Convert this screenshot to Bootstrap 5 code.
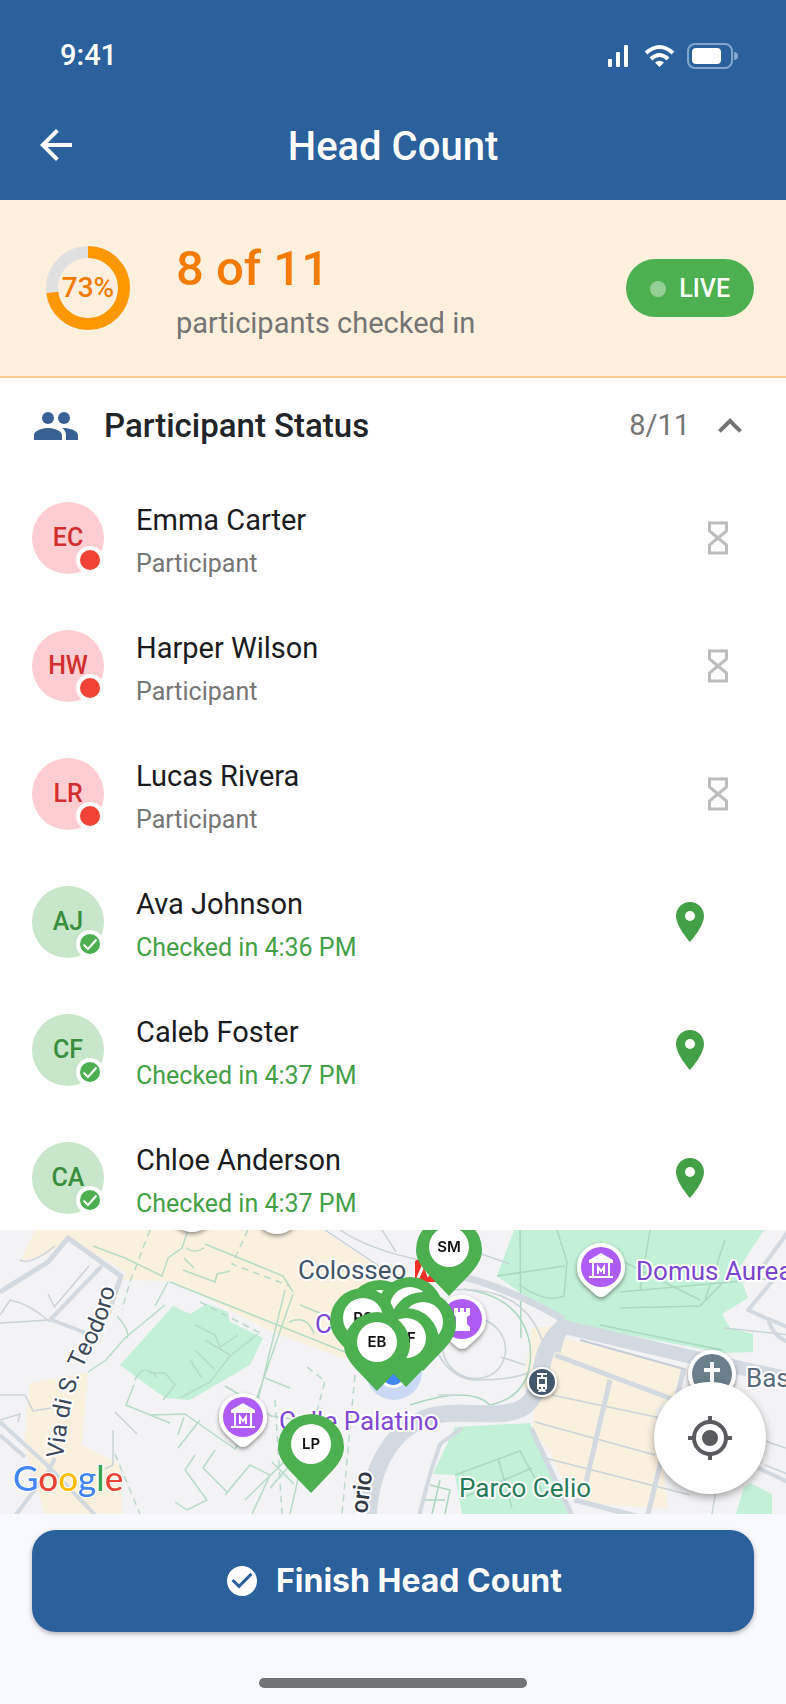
<!DOCTYPE html>
<html lang="en">
<head>
<meta charset="utf-8">
<meta name="viewport" content="width=device-width, initial-scale=1">
<title>Head Count</title>
<link href="https://cdn.jsdelivr.net/npm/bootstrap@5.3.0/dist/css/bootstrap.min.css" rel="stylesheet">
<style>
  :root { --brand: #2a609b; --ok: #4caf50; --muted: #757575; }
  body { font-family: Roboto, "Liberation Sans", sans-serif; color: #1a1b1e; background: #f8f9ff; }
  svg { display: block; flex: none; }
  .icon-lg { width: 48px; height: 48px; }
  .icon-md { width: 40px; height: 40px; }
  .icon-sm { width: 36px; height: 36px; }
  .app-top { background: var(--brand); height: 200px; }
  .status-strip { height: 112px; padding: 0 48px 0 60px; }
  .clock { font-size: 29px; font-weight: 500; }
  .title-strip { height: 66px; padding: 0 32px; }
  .screen-title { font-size: 40px; font-weight: 500; line-height: 48px; padding-top: 4px; }
  .end-space { width: 48px; }
  .summary { background: #fff0dd; border-bottom: 2px solid #f6c98a; height: 178px; padding: 0 32px 0 46px; }
  .ring { width: 84px; height: 84px; }
  .ring-label { font-size: 28px; font-weight: 500; color: #f57c00; line-height: 1; }
  .summary-text { margin-left: 46px; padding-top: 8px; }
  .big-count { font-size: 49px; font-weight: 500; line-height: 56px; color: #f57c00; }
  .sub-count { font-size: 29px; line-height: 40px; color: var(--muted); margin-top: 6px; }
  .live-pill { background: var(--ok); font-size: 25px; font-weight: 500; height: 58px; padding: 2px 24px 0; gap: 13px; }
  .live-dot { width: 16px; height: 16px; background: #94cf96; }
  .panel-toggle { height: 96px; padding: 0 32px; }
  .panel-title { font-size: 33px; font-weight: 500; line-height: 40px; margin-left: 24px; }
  .tally { font-size: 29px; color: var(--muted); }
  .people { min-height: 0; }
  .person { height: 128px; padding: 0 48px 0 32px; }
  .avatar { width: 72px; height: 72px; font-size: 25px; font-weight: 500; }
  .avatar-wait { background: #ffcdd2; color: #d32f2f; }
  .avatar-ok { background: #c8e6c9; color: #388e3c; }
  .state-dot { width: 28px; height: 28px; border: 4px solid #fff; background: #f44336; }
  .avatar-ok .state-dot { background: var(--ok); }
  .state-dot svg { width: 20px; height: 20px; }
  .person-text { margin-left: 32px; padding-top: 6px; }
  .person-name { font-size: 29px; line-height: 40px; }
  .person-sub { font-size: 25px; line-height: 36px; margin-top: 6px; color: var(--muted); }
  .person-sub.done { color: #43a047; }
  .locate { width: 96px; color: #43a047; }
  .map-area { height: 284px; background: #f3f2f4; }
  .map-area > svg { width: 100%; height: 100%; }
  .map-label { font-family: Roboto, sans-serif; font-size: 26px; paint-order: stroke; stroke: #fff; stroke-width: 4px; stroke-linejoin: round; }
  .street-label { font-size: 24px; }
  .pin-label { font-family: Inter, sans-serif; font-size: 15px; font-weight: 600; fill: #111; text-anchor: middle; }
  .logo-text { font-family: Lato, sans-serif; font-size: 35px; font-weight: 500; paint-order: stroke; stroke: #fff; stroke-width: 2px; }
  .recenter { width: 112px; height: 112px; right: 20px; bottom: 20px; color: #5a5b5e; box-shadow: 0 3px 8px rgba(0,0,0,.35); }
  .app-foot { height: 190px; padding: 16px 32px; }
  .finish { height: 102px; border-radius: 24px; background: var(--brand); font-family: Inter, sans-serif; font-size: 32px; font-weight: 700; gap: 16px; box-shadow: 0 2px 5px rgba(0,0,0,.3); }
  .finish:hover { background: #24548a; }
  .home-bar { width: 268px; height: 10px; background: #707276; }
</style>
</head>
<body>
<svg width="0" height="0" class="position-absolute" aria-hidden="true">
  <symbol id="i-hourglass" viewBox="0 0 40 40"><path fill="none" stroke="currentColor" stroke-width="3" d="M11.500 5h17v8L20 20l-8.500-7zM11.500 35h17v-8L20 20l-8.500 7z"/></symbol>
  <symbol id="i-place" viewBox="0 0 24 24"><path fill="currentColor" d="M12 2C8.130 2 5 5.130 5 9c0 5.250 7 13 7 13s7-7.750 7-13c0-3.870-3.130-7-7-7zm0 9.500a2.500 2.500 0 0 1 0-5 2.500 2.500 0 0 1 0 5z"/></symbol>
  <symbol id="i-tick" viewBox="0 0 20 20"><path fill="none" stroke="#fff" stroke-width="2" d="M3.500 10.500l4.500 4.500 8.500-9.500"/></symbol>
  <symbol id="m-pin" viewBox="-33 -79 66 79" overflow="visible"><path fill="#4caf50" d="M0 0L-22-23C-29-31-33-38-33-46A33 33 0 0 1 33-46C33-38 29-31 22-23Z"/><circle cy="-49" r="20" fill="#fff"/></symbol>
</svg>

<div class="d-flex flex-column min-vh-100 vh-100">
  <header class="app-top text-white flex-shrink-0">
    <div class="status-strip d-flex align-items-center justify-content-between">
      <span class="clock">9:41</span>
      <svg width="131" height="28" viewBox="0 0 131 28" fill="#fff" aria-label="Signal, Wi-Fi and battery">
        <rect x="1" y="17" width="4" height="8" rx="1"/><rect x="9" y="10" width="4" height="15" rx="1"/><rect x="17" y="3" width="4" height="22" rx="1"/>
        <g fill="none" stroke="#fff" stroke-width="4"><path d="M39 11Q52.500-1 66 11"/><path d="M44 17Q52.500 9 61 17"/></g><path d="M48 20.500q4.500-3.500 9 0L52.500 25z"/>
        <rect x="81" y="2" width="44" height="24" rx="7" fill="none" stroke="#82a5cf" stroke-width="2"/><rect x="85" y="6" width="29" height="16" rx="4"/><path fill="#82a5cf" d="M127 10q4 0 4 4t-4 4z"/>
      </svg>
    </div>
    <div class="title-strip d-flex align-items-center justify-content-between">
      <button type="button" class="btn p-0 border-0 text-white" aria-label="Back">
        <svg class="icon-lg" viewBox="0 0 24 24"><path fill="currentColor" d="M20 11H7.830l5.590-5.590L12 4l-8 8 8 8 1.410-1.410L7.830 13H20v-2z"/></svg>
      </button>
      <h1 class="screen-title m-0">Head Count</h1>
      <span class="end-space"></span>
    </div>
  </header>

  <section class="summary d-flex align-items-center flex-shrink-0">
    <div class="ring position-relative">
      <svg class="ring" viewBox="0 0 84 84"><circle cx="42" cy="42" r="36" fill="none" stroke="#e0e0e0" stroke-width="12"/><circle cx="42" cy="42" r="36" fill="none" stroke="#ff9800" stroke-width="12" pathLength="100" stroke-dasharray="73 27" transform="rotate(-90 42 42)"/></svg>
      <span class="ring-label position-absolute top-50 start-50 translate-middle">73%</span>
    </div>
    <div class="summary-text flex-grow-1">
      <div class="big-count">8 of 11</div>
      <div class="sub-count">participants checked in</div>
    </div>
    <span class="live-pill d-flex align-items-center rounded-pill text-white"><span class="live-dot rounded-circle"></span>LIVE</span>
  </section>

  <main class="d-flex flex-column flex-grow-1 bg-white people">
    <button type="button" class="panel-toggle btn rounded-0 border-0 d-flex align-items-center flex-shrink-0 text-start" data-bs-toggle="collapse" data-bs-target="#people" aria-expanded="true" aria-controls="people">
      <svg class="icon-lg" viewBox="0 0 24 24" fill="#3a6194"><circle cx="8" cy="8" r="3"/><circle cx="16" cy="8" r="3"/><path d="M8 13c-2.330 0-7 1.170-7 3.500V19h14v-2.500c0-2.330-4.670-3.500-7-3.500zM16 13c-.29 0-.62.02-.97.05 1.160.84 1.970 1.970 1.970 3.450V19h6v-2.500c0-2.330-4.670-3.500-7-3.500z"/></svg>
      <span class="panel-title flex-grow-1">Participant Status</span>
      <span class="tally me-3">8/11</span>
      <svg class="icon-lg" viewBox="0 0 24 24"><path fill="#757575" d="M12 8l-6 6 1.410 1.410L12 10.830l4.590 4.580L18 14z"/></svg>
    </button>
    <ul class="list-unstyled m-0 flex-grow-1 overflow-hidden people collapse show" id="people">
      <li class="person d-flex align-items-center">
        <div class="avatar avatar-wait rounded-circle position-relative d-flex align-items-center justify-content-center">EC<span class="state-dot rounded-circle position-absolute bottom-0 end-0"></span></div>
        <div class="person-text flex-grow-1"><div class="person-name">Emma Carter</div><div class="person-sub">Participant</div></div>
        <svg class="icon-md" color="#bdbdbd"><use href="#i-hourglass"/></svg>
      </li>
      <li class="person d-flex align-items-center">
        <div class="avatar avatar-wait rounded-circle position-relative d-flex align-items-center justify-content-center">HW<span class="state-dot rounded-circle position-absolute bottom-0 end-0"></span></div>
        <div class="person-text flex-grow-1"><div class="person-name">Harper Wilson</div><div class="person-sub">Participant</div></div>
        <svg class="icon-md" color="#bdbdbd"><use href="#i-hourglass"/></svg>
      </li>
      <li class="person d-flex align-items-center">
        <div class="avatar avatar-wait rounded-circle position-relative d-flex align-items-center justify-content-center">LR<span class="state-dot rounded-circle position-absolute bottom-0 end-0"></span></div>
        <div class="person-text flex-grow-1"><div class="person-name">Lucas Rivera</div><div class="person-sub">Participant</div></div>
        <svg class="icon-md" color="#bdbdbd"><use href="#i-hourglass"/></svg>
      </li>
      <li class="person d-flex align-items-center">
        <div class="avatar avatar-ok rounded-circle position-relative d-flex align-items-center justify-content-center">AJ<span class="state-dot rounded-circle position-absolute bottom-0 end-0"><svg><use href="#i-tick"/></svg></span></div>
        <div class="person-text flex-grow-1"><div class="person-name">Ava Johnson</div><div class="person-sub done">Checked in 4:36 PM</div></div>
        <button type="button" class="locate btn border-0 p-0 d-flex justify-content-center" aria-label="Show Ava Johnson on map"><svg class="icon-lg"><use href="#i-place"/></svg></button>
      </li>
      <li class="person d-flex align-items-center">
        <div class="avatar avatar-ok rounded-circle position-relative d-flex align-items-center justify-content-center">CF<span class="state-dot rounded-circle position-absolute bottom-0 end-0"><svg><use href="#i-tick"/></svg></span></div>
        <div class="person-text flex-grow-1"><div class="person-name">Caleb Foster</div><div class="person-sub done">Checked in 4:37 PM</div></div>
        <button type="button" class="locate btn border-0 p-0 d-flex justify-content-center" aria-label="Show Caleb Foster on map"><svg class="icon-lg"><use href="#i-place"/></svg></button>
      </li>
      <li class="person d-flex align-items-center">
        <div class="avatar avatar-ok rounded-circle position-relative d-flex align-items-center justify-content-center">CA<span class="state-dot rounded-circle position-absolute bottom-0 end-0"><svg><use href="#i-tick"/></svg></span></div>
        <div class="person-text flex-grow-1"><div class="person-name">Chloe Anderson</div><div class="person-sub done">Checked in 4:37 PM</div></div>
        <button type="button" class="locate btn border-0 p-0 d-flex justify-content-center" aria-label="Show Chloe Anderson on map"><svg class="icon-lg"><use href="#i-place"/></svg></button>
      </li>
    </ul>
  </main>

  <section class="map-area position-relative overflow-hidden flex-shrink-0" aria-label="Map of participants">
    <svg viewBox="0 0 786 284" preserveAspectRatio="xMidYMid slice">
      <defs>
        <filter id="soft" x="-20%" y="-20%" width="140%" height="150%"><feDropShadow dx="0" dy="2" stdDeviation="2" flood-opacity=".45"/></filter>
        <path id="teodoro" d="M63 229C67 196 70 168 82 140S102 108 112 72L118 46"/>
        <path id="orio" d="M367 284L374 230"/>
        <path id="poi" d="M-5 28L-17 17A24 24 0 1 1 17 17L5 28Q0 32-5 28Z"/>
      </defs>
      <!-- built-up and park areas -->
      <g fill="#faf0de">
        <path d="M35 0H322L380 38 388 60 345 129 275 103 172 51 122 50 126 42 68 8 48 24 20 32Z"/>
        <path d="M30 153L88 142 82 215 120 235 122 284H45L24 215Z"/>
        <path d="M565 108L682 137 674 165 656 180 668 279 600 274 570 268 550 222 532 200 535 172 552 128Z"/>
        <path d="M532 98L552 96 540 150 522 160Z"/>
      </g>
      <g fill="#c3f1d7">
        <path d="M173 76L190 84 207 74 228 82 230 92 263 108 250 135 190 170 165 168 120 135Z"/>
        <path d="M514 0H764L738 40 748 68 722 84 730 98 753 104 753 122 722 123 562 92 497 46Z"/>
        <path d="M455 197L530 193 568 284H462L455 245 433 244Z"/>
        <path d="M750 253L772 264V284H736L744 257Z"/>
      </g>
      <!-- footpaths -->
      <g fill="none" stroke="#b4dcc6" stroke-width="1.500">
        <path d="M93 16L125 28 162 46 168 28 182 18 188 0M186 18q9 6 18 0M184 28l10 10M205 14L283 46 293 62M170 52L350 124M168 52L155 76M165 75L125 108 106 130 88 142M117 86q14 16 10 22M183 40l32 12 2-8 13-3M293 64L252 182M285 60L256 178M300 75l30 12M289 92q18-8 25 12"/>
        <path d="M134 155l-8 20 24 10 35-1 50 35 16-26M150 185l20 8M178 205l6-18M200 190l-22 28M225 156l20 12 26 18 60 8M265 148L290 158M215 220l-12 18 25 25M195 225l-10 15 22 30-20 10-12-8M225 265l25-30 20 10-18 39M245 270L290 226M270 258l35-40M300 240l-10 44M272 232l22 22"/>
        <path d="M180 168l30-16 20-26 28-22M195 120l20 20M205 110l25 15M190 130l12 18M195 95l20 10 5 12 18-12M150 143h15l10 12-12 15M135 150q8-18 22-3"/>
      </g>
      <g fill="none" stroke="#b9d9cb" stroke-width="1.500" stroke-dasharray="7 5">
        <path d="M150 0L130 52 122 80M248 0L232 34 290 56M115 224L140 284M355 145L342 284M307 137l18 14-10 38M200 72L262 104M275 170L282 284"/>
      </g>
      <g fill="none" stroke="#a9d8bf" stroke-width="1.500">
        <path d="M521 108 520 0M557 0l10 32-3 34q-20 8-45-12M497 46l68-10M620 62L776 48M620 78L700 76 735 40M650 0l-10 60M725 10l-20 60M455 245l65-24 22 40M498 228l14 50M462 268l70-30M430 255l20 5-5 24M425 270h20M440 250l-8 34M600 95l122 25M620 30l80 40"/>
        <path d="M410 175q60-20 80 0 45-10 40-60-8-48-66-56"/>
      </g>
      <!-- contour lines -->
      <g fill="none" stroke="#c9d3d8" stroke-width="1.500">
        <ellipse cx="474" cy="118" rx="32" ry="30" transform="rotate(30 474 118)"/>
        <path d="M420 70q15 78 55 80 40 0 54-8M450 60q72-6 92 50M470 20l40 14M438 165h20M340 0q30 20 80 30M325 0l60 40M382 0l14 22M525 135l-24-8"/>
        <path d="M0 93L50 90M0 165l25 0 8 16 24-4M0 190l20-6-2 8M115 182l22 22M113 200v35l-8 4M50 92q-20-18-40-22L0 85M20 30q10 6 35-14M98 38L50 90M55 78L48 64M55 76l34-40M552 165L670 190M535 192L655 225M545 228L690 265M790 105L724 98M765 235l25 10M726 190q30 20 60 28M712 284l5-30"/>
      </g>
      <!-- streets -->
      <g fill="none" stroke="#d2d9e0" stroke-linejoin="round">
        <path stroke-width="17" d="M368 290C370 235 392 202 425 188 455 176 500 192 524 177 548 160 532 125 562 98"/>
        <path stroke-width="14" d="M556 95L700 129 786 148"/>
        <path stroke-width="7" d="M562 103L557 122M440 42Q500 52 564 90"/>
        <path stroke-width="5" d="M0 62L48 32 68 8 121 46 108 84M555 125L672 169M610 150L586 252M684 138L647 288M531 198L574 290M574 270L636 286"/>
        <path stroke-width="4" d="M50 90L102 36M52 90L86 103M0 192L46 234 98 288M12 290L48 242 55 228M786 35L748 80 766 88 790 98M764 35L788 2M768 88q4 18 20 24M430 244l10-30 22-16M418 290l12-46M758 238l30 14M0 205l25 22"/>
      </g>
      <path d="M580 110L684 139" stroke="#c4ccd8" stroke-width="2"/>

      <!-- own position -->
      <circle cx="394" cy="142" r="28" fill="#b7cdf3" opacity=".7"/>
      <circle cx="393" cy="144" r="14" fill="#fff"/><circle cx="393" cy="144" r="11" fill="#4285f4"/>

      <!-- place names -->
      <g class="map-label">
        <text x="298" y="49" fill="#43536a">Colosseo</text>
        <text x="315" y="103" fill="#8247d5">C</text>
        <text x="279" y="200" fill="#8247d5">Colle Palatino</text>
        <text x="636" y="50" fill="#7a45cf">Domus Aurea</text>
        <text x="746" y="157" fill="#5a6b7b">Bas</text>
        <text x="459" y="267" fill="#277b58">Parco Celio</text>
        <text class="street-label" fill="#3b4859"><textPath href="#teodoro">Via di S. Teodoro</textPath></text>
        <text class="street-label" fill="#333b46" font-weight="500"><textPath href="#orio">orio</textPath></text>
      </g>

      <!-- places -->
      <g filter="url(#soft)" fill="#fff">
        <circle cx="192" cy="-20" r="22"/><circle cx="277" cy="-18" r="22"/>
        <use href="#poi" x="243" y="187"/><use href="#poi" x="601" y="37"/><use href="#poi" x="462" y="89"/>
        <circle cx="712" cy="144" r="24"/><circle cx="542" cy="152" r="15"/>
      </g>
      <g fill="#af5cf7"><circle cx="243" cy="187" r="20"/><circle cx="601" cy="37" r="20"/><circle cx="462" cy="89" r="20"/></g>
      <circle cx="712" cy="144" r="20" fill="#6b7f8c"/><circle cx="542" cy="152" r="13" fill="#42586a"/>
      <g id="museum" fill="none" stroke="#fff" stroke-width="2"><path fill="#fff" stroke="none" d="M231 183v-3l12-7 12 7v3z"/><path d="M235 182v14M251 182v14M231 197h24M240 194v-7l3 4 3-4v7"/></g>
      <use href="#museum" x="358" y="-150"/>
      <path fill="#fff" d="M454 78h4v4h2v-4h4v4h2v-4h4v7l-3 2v7l3 3v4h-17v-4l3-3v-7l-2-2z"/>
      <path stroke="#fff" stroke-width="4" d="M712 132v23M704 140h16"/>
      <g fill="#fff"><path d="M537 143h10v2h-4v2h4v12l-2 1 1 2h-3l-1-1-1 1h-3l1-2-2-1v-12h4v-2h-4z"/><path fill="#42586a" d="M539 149h6v5h-6zM539 157h2v2h-2zM543 157h2v2h-2z"/></g>
      <rect x="415" y="30" width="24" height="22" rx="2" fill="#f12f25"/><path d="M418 48l6-14 4 10 5-10" fill="none" stroke="#fff" stroke-width="3"/>

      <!-- participant pins -->
      <use href="#m-pin" x="347" y="50" width="66" height="79"/>
      <use href="#m-pin" x="377" y="47" width="66" height="79"/>
      <use href="#m-pin" x="330" y="58" width="66" height="79"/><text class="pin-label" x="363" y="93">PS</text>
      <use href="#m-pin" x="390" y="62" width="66" height="79"/>
      <use href="#m-pin" x="373" y="78" width="66" height="79"/><text class="pin-label" x="406" y="113">CF</text>
      <use href="#m-pin" x="344" y="82" width="66" height="79"/><text class="pin-label" x="377" y="117">EB</text>
      <use href="#m-pin" x="416" y="-13" width="66" height="79"/><text class="pin-label" x="449" y="22">SM</text>
      <use href="#m-pin" x="278" y="184" width="66" height="79"/><text class="pin-label" x="311" y="219">LP</text>

      <text class="logo-text" x="13" y="261"><tspan fill="#4285f4">G</tspan><tspan fill="#ea4335">o</tspan><tspan fill="#fbbc04">o</tspan><tspan fill="#4285f4">g</tspan><tspan fill="#34a853">l</tspan><tspan fill="#ea4335">e</tspan></text>
    </svg>
    <button type="button" class="recenter btn bg-white rounded-circle border-0 position-absolute d-flex align-items-center justify-content-center p-0" aria-label="Centre on my location">
      <svg class="icon-lg" viewBox="0 0 24 24"><path fill="currentColor" d="M12 8a4 4 0 1 0 0 8 4 4 0 0 0 0-8zm8.940 3A8.994 8.994 0 0 0 13 3.060V1h-2v2.060A8.994 8.994 0 0 0 3.060 11H1v2h2.060A8.994 8.994 0 0 0 11 20.940V23h2v-2.060A8.994 8.994 0 0 0 20.940 13H23v-2h-2.060zM12 19a7 7 0 1 1 0-14 7 7 0 0 1 0 14z"/></svg>
    </button>
  </section>

  <footer class="app-foot d-flex flex-column align-items-center justify-content-between flex-shrink-0">
    <button type="button" class="finish btn w-100 border-0 text-white d-flex align-items-center justify-content-center">
      <svg class="icon-sm" viewBox="0 0 24 24"><path fill="currentColor" d="M12 2C6.480 2 2 6.480 2 12s4.480 10 10 10 10-4.480 10-10S17.520 2 12 2zm-2 15l-5-5 1.410-1.410L10 14.170l7.590-7.590L19 8l-9 9z"/></svg>
      Finish Head Count
    </button>
    <div class="home-bar rounded-pill"></div>
  </footer>
</div>
<script src="https://cdn.jsdelivr.net/npm/bootstrap@5.3.0/dist/js/bootstrap.bundle.min.js"></script>
</body>
</html>
